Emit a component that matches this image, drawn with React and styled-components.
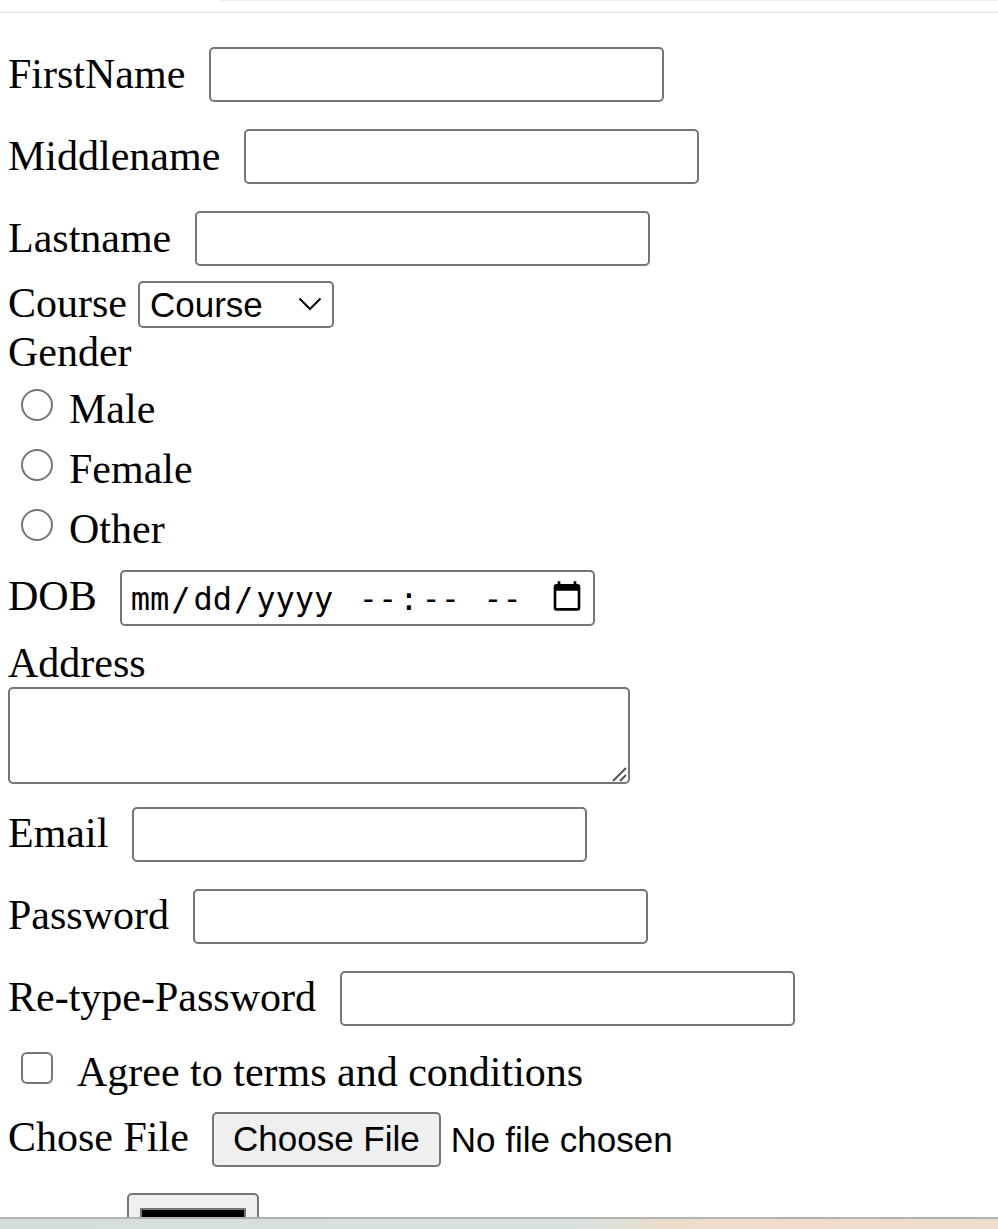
import React from "react";
import styled, { createGlobalStyle, css } from "styled-components";

const GlobalStyle = createGlobalStyle`
  *, *::before, *::after { box-sizing: border-box; }
  body { margin: 0; background: #fff; color: #000; }
`;

const serif = `"Liberation Serif", "Times New Roman", serif`;
const sans = `"Liberation Sans", Arial, sans-serif`;
const mono = `"DejaVu Sans Mono", Consolas, monospace`;
const grey = "#767676";

const Window = styled.div`
  display: flex;
  flex-direction: column;
  height: 100vh;
  overflow: hidden;
  font: 42px/48px ${serif};
`;

const TopBar = styled.header`
  flex: none;
  height: 13px;
  padding-left: 220px;
  border-bottom: 1px solid #dfdfdf;

  &::before {
    content: "";
    display: block;
    height: 1px;
    background: #e9eef9;
  }
`;

const Viewport = styled.main`
  flex: 1;
  min-height: 0;
  overflow: hidden;
`;

const Desktop = styled.footer`
  flex: none;
  height: 12px;
  border-top: 2px solid #b2b4b1;
  background: linear-gradient(to right, #d5dfd9 0%, #d8e0de 57%, #dee0d6 62%, #eedccb 67%, #f1dccf 80%, #eeddcd 100%);
`;

const Form = styled.form`
  display: flex;
  flex-direction: column;
  padding: 34px 8px 8px;
`;

const Group = styled.div`
  display: flex;
  flex-direction: column;
  gap: ${(p) => p.$gap || 0}px;
  margin-bottom: ${(p) => p.$after || 0}px;
`;

const Row = styled.div`
  display: flex;
  align-items: ${(p) => p.$align || "baseline"};
  gap: ${(p) => p.$gap || 24}px;
`;

const Label = styled.label`
  white-space: nowrap;
`;

const box = css`
  margin: 0;
  border: 2px solid ${grey};
  border-radius: 5px;
  background: #fff;
  color: #000;
  font: 35px/40px ${sans};
`;

const TextInput = styled.input`
  ${box}
  width: 455px;
  height: 55px;
  padding: 4px 5px 2px;
`;

const DateBox = styled.div`
  ${box}
  position: relative;
  display: flex;
  align-items: baseline;
  gap: 20px;
  width: 475px;
  height: 56px;
  padding: 7px 6px 5px;
`;

const DatePart = styled.input`
  flex: none;
  width: ${(p) => (p.type === "date" ? "208px" : "176px")};
  height: 40px;
  margin: 0;
  padding: 0;
  border: 0;
  background: none;
  color: #000;
  font: 32px/40px ${mono};

  &::-webkit-datetime-edit,
  &::-webkit-datetime-edit-fields-wrapper { padding: 0; }

  &::-webkit-datetime-edit-month-field,
  &::-webkit-datetime-edit-day-field,
  &::-webkit-datetime-edit-year-field,
  &::-webkit-datetime-edit-hour-field,
  &::-webkit-datetime-edit-minute-field { padding: 0 2px 0 3px; }

  &::-webkit-datetime-edit-ampm-field { padding: 0 2px; }

  &::-webkit-calendar-picker-indicator {
    display: ${(p) => (p.type === "date" ? "block" : "none")};
    position: absolute;
    right: 9px;
    top: 8px;
    width: 34px;
    height: 34px;
    padding: 0;
    margin: 0;
  }
`;

const SelectWrap = styled.span`
  position: relative;
  display: inline-block;
`;

const Select = styled.select`
  ${box}
  appearance: none;
  display: block;
  width: 196px;
  height: 47px;
  padding: 2px 40px 0 10px;
`;

const Chevron = styled.svg`
  position: absolute;
  right: 12px;
  top: 16px;
  width: 24px;
  height: 14px;
  pointer-events: none;
`;

const AreaWrap = styled.div`
  position: relative;
  width: 622px;
  max-width: 100%;
`;

const TextArea = styled.textarea`
  ${box}
  display: block;
  width: 100%;
  height: 97px;
  padding: 5px;
  resize: none;
`;

const Grip = styled.svg`
  position: absolute;
  right: 3px;
  bottom: 2px;
  width: 15px;
  height: 15px;
  pointer-events: none;
`;

const Choice = styled.input`
  appearance: none;
  flex: none;
  width: 32px;
  height: 32px;
  margin: 0 0 8px 13px;
  border: 2px solid ${grey};
  border-radius: ${(p) => (p.type === "radio" ? "50%" : "6px")};
  background: #fff;

  &:checked { background: #0075ff; box-shadow: inset 0 0 0 4px #fff; }
`;

const FileInput = styled.input`
  font: 35px/40px ${sans};
  color: #000;

  &::file-selector-button {
    width: 229px;
    height: 55px;
    margin: 0 10px 0 0;
    padding: 0;
    border: 2px solid ${grey};
    border-radius: 5px;
    background: #efefef;
    color: #000;
    font: 35px/40px ${sans};
  }
`;

const ColorInput = styled.input`
  width: 132px;
  height: 71px;
  margin-left: 119px;
  padding: 8px 6px;
  border: 2px solid ${grey};
  border-radius: 5px;
  background: #efefef;

  &::-webkit-color-swatch-wrapper { padding: 5px; }
  &::-webkit-color-swatch { border: 2px solid ${grey}; }
`;

const Field = ({ id, label, type = "text" }) => (
  <Row>
    <Label htmlFor={id}>{label}</Label>
    <TextInput id={id} name={id} type={type} />
  </Row>
);

export default function App() {
  return (
    <>
      <GlobalStyle />
      <Window>
        <TopBar />
        <Viewport>
          <Form>
            <Group $gap={27} $after={13}>
              <Field id="firstname" label="FirstName" />
              <Field id="middlename" label="Middlename" />
              <Field id="lastname" label="Lastname" />
            </Group>
            <Row $gap={11}>
              <Label htmlFor="course">Course</Label>
              <SelectWrap>
                <Select id="course" name="course">
                  <option>Course</option>
                </Select>
                <Chevron viewBox="0 0 24 14" fill="none" stroke="#000" strokeWidth="2">
                  <path d="M1.5 1.5 12 12 22.5 1.5" />
                </Chevron>
              </SelectWrap>
            </Row>
            <Group role="radiogroup" aria-labelledby="gender" $gap={9} $after={17}>
              <div id="gender">Gender</div>
              <Group $gap={12}>
                {["Male", "Female", "Other"].map((name) => (
                  <Row key={name} $gap={16} $align="center">
                    <Choice type="radio" name="gender" id={name} value={name} />
                    <Label htmlFor={name}>{name}</Label>
                  </Row>
                ))}
              </Group>
            </Group>
            <Group $after={13}>
              <Row $gap={23}>
                <Label htmlFor="dob">DOB</Label>
                <DateBox>
                  <DatePart id="dob" name="dob" type="date" />
                  <DatePart name="dobTime" type="time" aria-label="Time of birth" />
                </DateBox>
              </Row>
            </Group>
            <Group $after={23}>
              <Label htmlFor="address">Address</Label>
              <AreaWrap>
                <TextArea id="address" name="address" />
                <Grip viewBox="0 0 15 15" stroke="#555" strokeWidth="2">
                  <path d="M1 14 14 1M8 14l6-6" />
                </Grip>
              </AreaWrap>
            </Group>
            <Group $gap={27} $after={22}>
              <Field id="email" label="Email" type="email" />
              <Field id="password" label="Password" type="password" />
              <Field id="retype" label="Re-type-Password" type="password" />
            </Group>
            <Group $after={16}>
              <Row $align="center">
                <Choice type="checkbox" id="agree" name="agree" />
                <Label htmlFor="agree">Agree to terms and conditions</Label>
              </Row>
            </Group>
            <Group $after={26}>
              <Row $gap={23}>
                <Label htmlFor="file">Chose File</Label>
                <FileInput id="file" name="file" type="file" />
              </Row>
            </Group>
            <Row>
              <ColorInput name="color" type="color" aria-label="Color" defaultValue="#000000" />
            </Row>
          </Form>
        </Viewport>
        <Desktop />
      </Window>
    </>
  );
}
